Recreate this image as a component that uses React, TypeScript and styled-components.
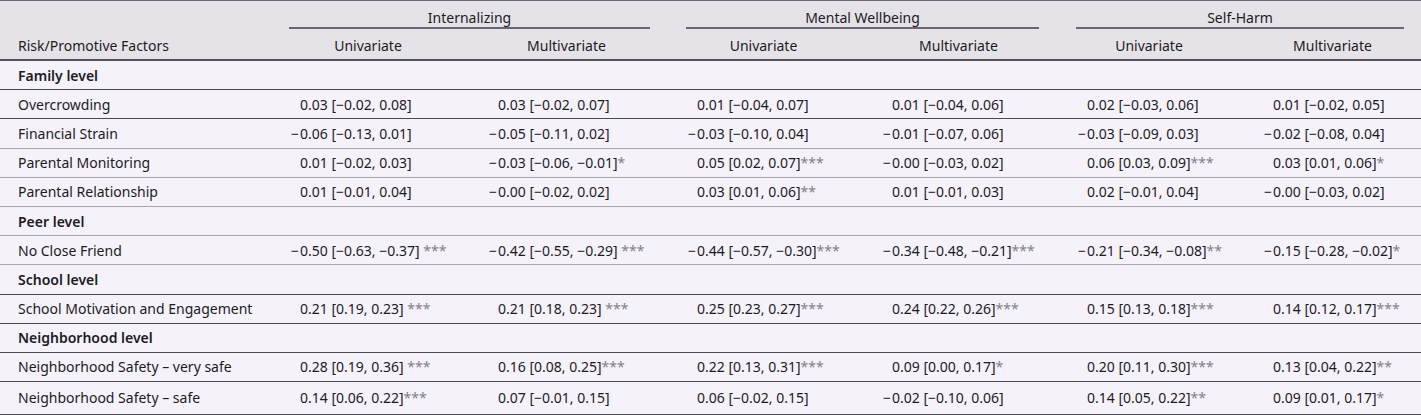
import React from 'react'
import styled, { createGlobalStyle } from 'styled-components'

const COLS = '289px 198px 199px 195px 195px 186px 159px'

type Row = {
  label: string
  section?: boolean
  dark?: boolean
  vals?: string[]
}

const rows: Row[] = [
  { label: 'Family level', section: true, dark: true },
  {
    label: 'Overcrowding',
    dark: true,
    vals: ['0.03 [−0.02, 0.08]', '0.03 [−0.02, 0.07]', '0.01 [−0.04, 0.07]', '0.01 [−0.04, 0.06]', '0.02 [−0.03, 0.06]', '0.01 [−0.02, 0.05]'],
  },
  {
    label: 'Financial Strain',
    vals: ['−0.06 [−0.13, 0.01]', '−0.05 [−0.11, 0.02]', '−0.03 [−0.10, 0.04]', '−0.01 [−0.07, 0.06]', '−0.03 [−0.09, 0.03]', '−0.02 [−0.08, 0.04]'],
  },
  {
    label: 'Parental Monitoring',
    vals: ['0.01 [−0.02, 0.03]', '−0.03 [−0.06, −0.01]*', '0.05 [0.02, 0.07]***', '−0.00 [−0.03, 0.02]', '0.06 [0.03, 0.09]***', '0.03 [0.01, 0.06]*'],
  },
  {
    label: 'Parental Relationship',
    vals: ['0.01 [−0.01, 0.04]', '−0.00 [−0.02, 0.02]', '0.03 [0.01, 0.06]**', '0.01 [−0.01, 0.03]', '0.02 [−0.01, 0.04]', '−0.00 [−0.03, 0.02]'],
  },
  { label: 'Peer level', section: true },
  {
    label: 'No Close Friend',
    vals: ['−0.50 [−0.63, −0.37] ***', '−0.42 [−0.55, −0.29] ***', '−0.44 [−0.57, −0.30]***', '−0.34 [−0.48, −0.21]***', '−0.21 [−0.34, −0.08]**', '−0.15 [−0.28, −0.02]*'],
  },
  { label: 'School level', section: true, dark: true },
  {
    label: 'School Motivation and Engagement',
    dark: true,
    vals: ['0.21 [0.19, 0.23] ***', '0.21 [0.18, 0.23] ***', '0.25 [0.23, 0.27]***', '0.24 [0.22, 0.26]***', '0.15 [0.13, 0.18]***', '0.14 [0.12, 0.17]***'],
  },
  { label: 'Neighborhood level', section: true, dark: true },
  {
    label: 'Neighborhood Safety – very safe',
    dark: true,
    vals: ['0.28 [0.19, 0.36] ***', '0.16 [0.08, 0.25]***', '0.22 [0.13, 0.31]***', '0.09 [0.00, 0.17]*', '0.20 [0.11, 0.30]***', '0.13 [0.04, 0.22]**'],
  },
  {
    label: 'Neighborhood Safety – safe',
    dark: true,
    vals: ['0.14 [0.06, 0.22]***', '0.07 [−0.01, 0.15]', '0.06 [−0.02, 0.15]', '−0.02 [−0.10, 0.06]', '0.14 [0.05, 0.22]**', '0.09 [0.01, 0.17]*'],
  },
]

const groups = [
  { title: 'Internalizing', gap: 36 },
  { title: 'Mental Wellbeing', gap: 37 },
  { title: 'Self-Harm', gap: 17 },
]

const subs = ['Univariate', 'Multivariate', 'Univariate', 'Multivariate', 'Univariate', 'Multivariate']

const Value = ({ text }: { text: string }) => {
  const m = text.match(/^(−?)(.*?)(\**)$/)
  const minus = m ? m[1] : ''
  const body = m ? m[2] : text
  const stars = m ? m[3] : ''
  return (
    <>
      {minus && <Minus>−</Minus>}
      {body}
      {stars && <Stars>{stars}</Stars>}
    </>
  )
}

export default function App() {
  return (
    <>
      <GlobalStyle />
      <Table>
        <Head>
          <GroupRow>
            <span />
            {groups.map((g) => (
              <GroupCell key={g.title} $gap={g.gap}>
                <GroupLabel>{g.title}</GroupLabel>
              </GroupCell>
            ))}
          </GroupRow>
          <SubRow>
            <FactorHead>Risk/Promotive Factors</FactorHead>
            {subs.map((s, i) => (
              <SubCell key={i} $last={i === subs.length - 1}>
                {s}
              </SubCell>
            ))}
          </SubRow>
        </Head>
        {rows.map((r, i) => (
          <BodyRow key={r.label} $dark={r.dark} $last={i === rows.length - 1}>
            <Label $bold={r.section}>{r.label}</Label>
            {r.vals?.map((v, j) => (
              <Cell key={j} $neg={v.startsWith('−')}>
                <Value text={v} />
              </Cell>
            ))}
          </BodyRow>
        ))}
      </Table>
    </>
  )
}

const GlobalStyle = createGlobalStyle`
  body {
    margin: 0;
    background: #ffffff;
    font-family: 'Noto Sans', 'Open Sans', sans-serif;
    font-size: 14px;
    color: #1c1b1f;
  }
`

const Table = styled.div`
  width: 1421px;
  background: #f5f2fa;
`

const Head = styled.div`
  background: #e6e3e8;
  border-top: 1px solid #6b6870;
  border-bottom: 2px solid #55525a;
`

const GroupRow = styled.div`
  display: grid;
  grid-template-columns: 289px 397px 390px 345px;
  height: 30px;
`

const GroupCell = styled.div<{ $gap: number }>`
  display: flex;
  padding-right: ${(p) => p.$gap}px;
`

const GroupLabel = styled.div`
  flex: 1;
  text-align: center;
  line-height: 18px;
  padding-top: 8px;
  border-bottom: 2px solid #6a6670;
  height: 28px;
  box-sizing: border-box;
`

const SubRow = styled.div`
  display: grid;
  grid-template-columns: ${COLS};
  height: 28px;
  align-items: center;
`

const FactorHead = styled.div`
  padding-left: 18px;
  padding-top: 1px;
`

const SubCell = styled.div<{ $last?: boolean }>`
  text-align: center;
  padding-right: ${(p) => (p.$last ? 18 : 40)}px;
  padding-top: 1px;
`

const BodyRow = styled.div<{ $dark?: boolean; $last?: boolean }>`
  display: grid;
  grid-template-columns: ${COLS};
  align-items: center;
  box-sizing: border-box;
  height: ${(p) => (p.$last ? 32.5 : 29.2)}px;
  border-bottom: ${(p) => (p.$dark ? '1.5px solid #4c4a50' : '1px solid #a9a6ad')};
`

const Label = styled.div<{ $bold?: boolean }>`
  padding-left: 18px;
  font-weight: ${(p) => (p.$bold ? 600 : 400)};
  white-space: nowrap;
`

const Cell = styled.div<{ $neg?: boolean }>`
  padding-left: ${(p) => (p.$neg ? 1 : 11)}px;
  white-space: nowrap;
`

const Minus = styled.span`
  display: inline-block;
  width: 10px;
  text-align: right;
  padding-right: 1px;
  box-sizing: border-box;
`

const Stars = styled.span`
  color: #858189;
`
